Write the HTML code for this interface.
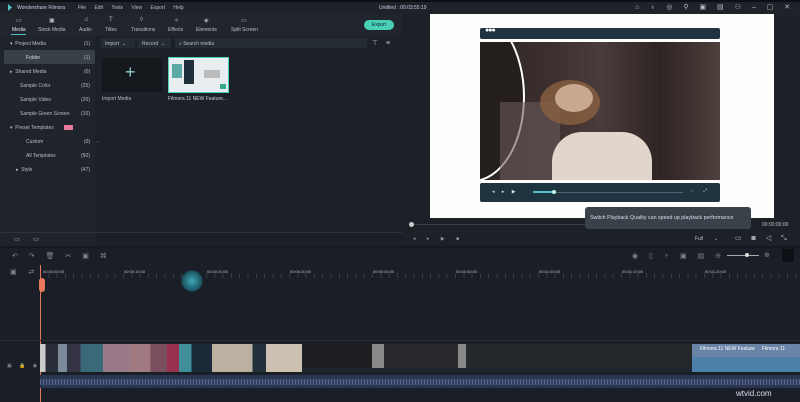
<!DOCTYPE html>
<html><head><style>
*{margin:0;padding:0;box-sizing:border-box}
body{width:800px;height:402px;overflow:hidden;background:#1b2027;font-family:"Liberation Sans",sans-serif;color:#b8bec6;font-size:5px;position:relative}
.a{position:absolute}
.t{position:absolute;white-space:nowrap}
</style></head><body>
<div class="a" style="left:0;top:0;width:800px;height:2px;background:#0c0e11"></div>
<div class="a" style="left:0;top:2px;width:800px;height:12px;background:#1e232a"></div>
<div class="a" style="left:8px;top:4px;width:4px;height:7px;background:#4fc3c3;clip-path:polygon(0 0,100% 50%,0 100%)"></div>
<div class="t" style="left:17px;top:5px;color:#ccd">Wondershare Filmora</div>
<div class="t" style="left:78px;top:5px;word-spacing:7px">File Edit Tools View Export Help</div>
<div class="t" style="left:379px;top:5px;color:#ccd">Untitled : 00:03:55:19</div>
<div class="t" style="left:635px;top:3px;font-size:7px;word-spacing:9px">⌂ ♁ ◎ ⚲ ▣ ▤ ⚇ – ▢ ✕</div>
<div class="a" style="left:0;top:14px;width:402px;height:22px;background:#21262e"></div>
<div class="t" style="left:12px;top:27px;color:#e6e8ea">Media</div>
<div class="a" style="left:11px;top:34px;width:15px;height:1px;background:#4fc3c3"></div>
<div class="t" style="left:38px;top:27px">Stock Media</div>
<div class="t" style="left:79px;top:27px">Audio</div>
<div class="t" style="left:105px;top:27px">Titles</div>
<div class="t" style="left:131px;top:27px">Transitions</div>
<div class="t" style="left:168px;top:27px">Effects</div>
<div class="t" style="left:196px;top:27px">Elements</div>
<div class="t" style="left:231px;top:27px">Split Screen</div>
<div class="t" style="left:16px;top:17px;font-size:6px;">▭</div>
<div class="t" style="left:49px;top:17px;font-size:6px;">▣</div>
<div class="t" style="left:84px;top:17px;font-size:6px;">♫</div>
<div class="t" style="left:109px;top:17px;font-size:6px;">T</div>
<div class="t" style="left:140px;top:17px;font-size:6px;">◊</div>
<div class="t" style="left:174px;top:17px;font-size:6px;">✧</div>
<div class="t" style="left:204px;top:17px;font-size:6px;">◈</div>
<div class="t" style="left:241px;top:17px;font-size:6px;">▭</div>
<div class="a" style="left:364px;top:20px;width:30px;height:10px;border-radius:5px;background:#49d1b6;color:#123;font-size:5px;text-align:center;line-height:10px">Export</div>
<div class="a" style="left:0;top:36px;width:95px;height:210px;background:#1f242b"></div>
<div class="a" style="left:4px;top:50px;width:91px;height:14px;background:#3a4048"></div>
<div class="t" style="left:10px;top:41px">▾ &nbsp;Project Media</div><div class="t" style="left:84px;top:41px">(1)</div>
<div class="t" style="left:26px;top:55px;color:#dde">Folder</div><div class="t" style="left:84px;top:55px">(1)</div>
<div class="t" style="left:10px;top:69px">▸ &nbsp;Shared Media</div><div class="t" style="left:84px;top:69px">(0)</div>
<div class="t" style="left:20px;top:83px">Sample Color</div><div class="t" style="left:81px;top:83px">(25)</div>
<div class="t" style="left:20px;top:97px">Sample Video</div><div class="t" style="left:81px;top:97px">(20)</div>
<div class="t" style="left:20px;top:111px">Sample Green Screen</div><div class="t" style="left:81px;top:111px">(10)</div>
<div class="t" style="left:10px;top:125px">▾ &nbsp;Preset Templates</div>
<div class="a" style="left:64px;top:125px;width:9px;height:5px;background:#e67a9a"></div>
<div class="t" style="left:26px;top:139px">Custom</div><div class="t" style="left:84px;top:139px">(0)</div>
<div class="t" style="left:26px;top:153px">All Templates</div><div class="t" style="left:81px;top:153px">(50)</div>
<div class="t" style="left:16px;top:167px">▸ &nbsp;Style</div><div class="t" style="left:81px;top:167px">(47)</div>
<div class="t" style="left:97px;top:139px">◂</div>
<div class="a" style="left:0;top:232px;width:402px;height:1px;background:#2d333b"></div>
<div class="t" style="left:14px;top:236px;font-size:6px;word-spacing:12px">▭ ▭</div>
<div class="a" style="left:98px;top:36px;width:304px;height:196px;background:#1c2128"></div>
<div class="a" style="left:101px;top:38px;width:34px;height:10px;background:#262c34"></div>
<div class="t" style="left:105px;top:41px">Import &nbsp;⌄</div>
<div class="a" style="left:137px;top:38px;width:34px;height:10px;background:#262c34"></div>
<div class="t" style="left:142px;top:41px">Record &nbsp;⌄</div>
<div class="a" style="left:175px;top:38px;width:192px;height:10px;background:#262c34"></div>
<div class="t" style="left:179px;top:41px">⌕ Search media</div>
<div class="t" style="left:372px;top:39px;font-size:7px;word-spacing:6px">⊤ ≡</div>
<div class="a" style="left:102px;top:58px;width:60px;height:34px;background:#14181d"></div>
<div class="t" style="left:125px;top:62px;font-size:18px;color:#8ccfc9;font-weight:100">+</div>
<div class="t" style="left:102px;top:96px">Import Media</div>
<div class="a" style="left:168px;top:57px;width:61px;height:36px;background:#e8eef0;border:1px solid #49d1b6"></div>
<div class="a" style="left:172px;top:64px;width:10px;height:14px;background:#5aa9a4"></div>
<div class="a" style="left:184px;top:60px;width:10px;height:24px;background:#20303a"></div>
<div class="a" style="left:204px;top:70px;width:16px;height:8px;background:#bbb"></div>
<div class="a" style="left:220px;top:84px;width:6px;height:5px;background:#3a8"></div>
<div class="t" style="left:168px;top:96px;color:#ccd">Filmora 11 NEW Feature...</div>
<div class="a" style="left:403px;top:14px;width:397px;height:232px;background:#1c2128"></div>
<div class="a" style="left:430px;top:14px;width:344px;height:204px;background:#fdfdfd"></div>
<div class="a" style="left:480px;top:28px;width:240px;height:11px;background:#1f3440;border-radius:2px"></div>
<div class="t" style="left:485px;top:27px;font-size:7px;color:#fff;letter-spacing:-1px">●●●</div>
<div class="a" style="left:480px;top:42px;width:240px;height:138px;background:linear-gradient(90deg,#2e2626 0%,#3c302f 30%,#4a3c3a 50%,#2e2424 75%,#4d403c 100%);overflow:hidden">
 <div class="a" style="left:-60px;top:-30px;width:105px;height:170px;border:2px solid #fff;border-radius:50%;background:#241e1d"></div>
 <div class="a" style="left:20px;top:60px;width:60px;height:80px;background:#6a5a5a;opacity:.6"></div>
 <div class="a" style="left:60px;top:38px;width:60px;height:45px;border-radius:50%;background:#8a6040;opacity:.8"></div>
 <div class="a" style="left:75px;top:42px;width:38px;height:28px;border-radius:50%;background:#c9a890"></div>
 <div class="a" style="left:72px;top:90px;width:100px;height:50px;border-radius:30px 30px 0 0;background:#e0d6cc"></div>
</div>
<div class="a" style="left:480px;top:183px;width:240px;height:19px;background:#1f3440;border-radius:2px"></div>
<div class="t" style="left:492px;top:189px;color:#cde;word-spacing:6px">◂ ▸ ▶</div>
<div class="a" style="left:533px;top:192px;width:150px;height:1px;background:#4b6270"></div>
<div class="a" style="left:533px;top:191px;width:21px;height:2px;background:#4fc3c3"></div>
<div class="a" style="left:552px;top:190px;width:4px;height:4px;border-radius:50%;background:#cfe"></div>
<div class="t" style="left:691px;top:188px;color:#cde;word-spacing:8px">◌ ⤢</div>
<div class="a" style="left:410px;top:224px;width:280px;height:1px;background:#3a4048"></div>
<div class="a" style="left:409px;top:222px;width:5px;height:5px;border-radius:50%;background:#ccc"></div>
<div class="t" style="left:762px;top:222px">00:00:00:00</div>
<div class="t" style="left:413px;top:236px;color:#999;word-spacing:10px">◂ ▸ ▶ ■</div>
<div class="t" style="left:695px;top:236px">Full &nbsp;&nbsp;&nbsp;&nbsp;&nbsp;&nbsp;&nbsp;⌄</div>
<div class="t" style="left:735px;top:234px;font-size:7px;word-spacing:8px">▭ ◙ ◁ ⤡</div>
<div class="a" style="left:585px;top:207px;width:166px;height:22px;background:#3a4149;border-radius:3px"></div>
<div class="t" style="left:590px;top:215px;color:#dde;font-size:5.3px">Switch Playback Quality can speed up playback performance</div>
<div class="a" style="left:0;top:246px;width:800px;height:2px;background:#15191e"></div>
<div class="a" style="left:0;top:248px;width:800px;height:154px;background:#1a1f27"></div>
<div class="t" style="left:12px;top:252px;font-size:7px;color:#888;word-spacing:9px">↶ ↷ 🗑 ✂ ▣ ⌘</div>
<div class="t" style="left:632px;top:252px;font-size:7px;color:#888;word-spacing:9px">◉ ▯ ♆ ▣ ▤ ⊖</div>
<div class="a" style="left:727px;top:255px;width:32px;height:1px;background:#aaa"></div>
<div class="a" style="left:745px;top:253px;width:4px;height:4px;border-radius:50%;background:#ddd"></div>
<div class="t" style="left:764px;top:251px;font-size:7px;color:#888">⊕</div>
<div class="a" style="left:782px;top:249px;width:12px;height:13px;background:#0d1014"></div>
<div class="t" style="left:10px;top:268px;font-size:7px;color:#888;word-spacing:10px">▣ ⇄</div>
<div class="a" style="left:40px;top:273px;width:760px;height:5px;background:repeating-linear-gradient(90deg,#556 0 1px,transparent 1px 8.3px);opacity:.5"></div>
<div class="t" style="left:43px;top:269px;font-size:4px">00:00:00:00</div>
<div class="t" style="left:124px;top:269px;font-size:4px">00:00:10:00</div>
<div class="t" style="left:207px;top:269px;font-size:4px">00:00:20:00</div>
<div class="t" style="left:290px;top:269px;font-size:4px">00:00:30:00</div>
<div class="t" style="left:373px;top:269px;font-size:4px">00:00:40:00</div>
<div class="t" style="left:456px;top:269px;font-size:4px">00:00:50:00</div>
<div class="t" style="left:539px;top:269px;font-size:4px">00:01:00:00</div>
<div class="t" style="left:622px;top:269px;font-size:4px">00:01:10:00</div>
<div class="t" style="left:705px;top:269px;font-size:4px">00:01:20:00</div>
<div class="a" style="left:181px;top:270px;width:22px;height:22px;border-radius:50%;background:radial-gradient(#3fa8b4,#1a5a66 60%,transparent 75%)"></div>
<div class="a" style="left:40px;top:265px;width:1px;height:137px;background:#e8795d"></div>
<div class="a" style="left:39px;top:278px;width:6px;height:14px;border-radius:3px;background:#e8795d"></div>
<div class="a" style="left:0;top:340px;width:800px;height:1px;background:#2a3039"></div>
<div class="a" style="left:40px;top:344px;width:760px;height:28px;background:#202630"></div>
<div class="a" style="left:40px;top:344px;width:90px;height:28px;background:linear-gradient(90deg,#ccc 0 6%,#2a2d3a 6% 20%,#7a8a9a 20% 30%,#334 30% 45%,#3a6a7a 45% 70%,#9a7a88 70% 100%)"></div>
<div class="a" style="left:130px;top:344px;width:82px;height:28px;background:linear-gradient(90deg,#a07a80 0 25%,#7a5060 25% 45%,#9a3050 45% 60%,#40909a 60% 75%,#1a2a38 75% 100%)"></div>
<div class="a" style="left:212px;top:344px;width:90px;height:28px;background:linear-gradient(90deg,#bcb0a0 0 45%,#24303c 45% 60%,#ccc0b0 60% 100%)"></div>
<div class="a" style="left:302px;top:344px;width:390px;height:24px;background:linear-gradient(90deg,#1e1f22 0 18%,#888 18% 21%,#28292c 21% 40%,#888 40% 42%,#25282b 42% 100%)"></div>
<div class="a" style="left:692px;top:344px;width:108px;height:28px;background:#6a84a8"></div>
<div class="a" style="left:692px;top:357px;width:108px;height:15px;background:#4a80aa"></div>
<div class="t" style="left:700px;top:346px;color:#fff;font-size:5px">Filmora 11 NEW Feature &nbsp;&nbsp;&nbsp;&nbsp;Filmora 11</div>
<div class="t" style="left:7px;top:363px;color:#888;word-spacing:6px">▣ 🔒 ◉</div>
<div class="a" style="left:40px;top:375px;width:760px;height:13px;background:#2a3550"></div>
<div class="a" style="left:40px;top:379px;width:760px;height:6px;background:repeating-linear-gradient(90deg,#55628e 0 1px,#35425f 1px 3px)"></div>
<div class="t" style="left:736px;top:389px;color:#dde;font-size:8px">wtvid.com</div>
</body></html>
